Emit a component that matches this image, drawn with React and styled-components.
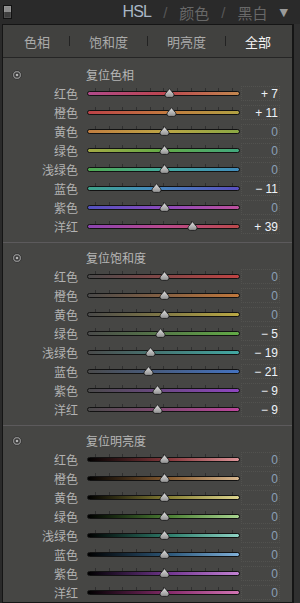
import React from "react";
import styled, { createGlobalStyle } from "styled-components";

const Global = createGlobalStyle`
  html, body { margin: 0; padding: 0; background: #2a2a2a; }
  body { width: 300px; height: 603px; overflow: hidden; }
  #root { width: 300px; height: 603px; }
`;

const CJK = `"Noto Sans CJK SC", "Noto Sans", sans-serif`;

const Root = styled.div`
  width: 300px;
  height: 603px;
  overflow: hidden;
  background: #2a2a2a;
  display: flex;
  flex-direction: column;
`;

const Header = styled.div`
  height: 24px;
  flex: none;
  display: flex;
  align-items: center;
  padding: 0 12px 0 3px;
`;

const PanelToggle = styled.div`
  width: 7px;
  height: 12px;
  border: 1px solid #121212;
  background: linear-gradient(to bottom, #8a8a8a 0 50%, #3e3e3e 50% 100%);
  box-shadow: inset 0 0 0 1px rgba(255,255,255,0.08);
  margin-top: -1px;
`;

const Nav = styled.div`
  margin-left: auto;
  display: flex;
  align-items: center;
  gap: 12px;
`;

const NavItem = styled.span`
  font-family: ${(p) => (p.$latin ? `"Liberation Sans", Arial, sans-serif` : CJK)};
  font-size: ${(p) => (p.$latin ? "16px" : "15px")};
  letter-spacing: ${(p) => (p.$latin ? "-0.8px" : "0")};
  color: ${(p) => (p.$active ? "#a9b6c5" : "#686868")};
  line-height: 1;
`;

const NavSlash = styled.span`
  font-family: "Liberation Sans", Arial, sans-serif;
  font-size: 15px;
  color: #575757;
  line-height: 1;
`;

const Caret = styled.span`
  font-family: "DejaVu Sans", sans-serif;
  font-size: 11px;
  color: #9a9a9a;
  line-height: 1;
`;

const Body = styled.div`
  flex: 1;
  display: flex;
  min-height: 0;
`;

const Panel = styled.div`
  margin-left: 2px;
  width: 289px;
  border: 1px solid #151515;
  border-right-width: 2px;
  background: #464644;
  display: flex;
  flex-direction: column;
`;

const Gutter = styled.div`
  flex: 1;
  background: #303030;
`;

const TabBar = styled.div`
  height: 32px;
  flex: none;
  background: #41413f;
  border-bottom: 1px solid #252525;
  display: flex;
  align-items: center;
  gap: 19px;
  padding-left: 21px;
`;

const Tab = styled.span`
  font-family: ${CJK};
  font-size: 13px;
  line-height: 1;
  color: ${(p) => (p.$active ? "#f4f4f4" : "#aaaaaa")};
`;

const TabSep = styled.span`
  width: 1px;
  height: 10px;
  background: #222;
`;

const Section = styled.div`
  padding: ${(p) => (p.$first ? "8px" : "6px")} 0 6px;
  border-top: ${(p) => (p.$first ? "none" : "1px solid #5c5a5c")};
`;

const Grid = styled.div`
  display: grid;
  grid-template-columns: 84px 153px 40px;
  align-items: center;
  height: ${(p) => p.$h}px;
`;

const ResetIcon = styled.svg`
  margin-left: 9px;
  display: block;
`;

const SectionTitle = styled.span`
  font-family: ${CJK};
  font-size: 12px;
  line-height: 1;
  color: #b6b6b6;
  margin-left: -1px;
`;

const Label = styled.span`
  font-family: ${CJK};
  font-size: 12px;
  line-height: 1;
  color: #b2b2b2;
  justify-self: end;
  padding-right: 9px;
`;

const TrackWrap = styled.div`
  position: relative;
  height: 19px;
  display: flex;
  align-items: center;
  &::before {
    content: "";
    position: absolute;
    left: 8px;
    width: 138px;
    top: 4px;
    height: 3px;
    background: repeating-linear-gradient(
      to right,
      #303030 0 1px,
      transparent 1px 13.7px
    );
  }
`;

const Track = styled.div`
  width: 100%;
  height: 5px;
  box-sizing: border-box;
  border: 1px solid #121212;
  border-radius: 3px;
  background: ${(p) => p.$bg};
`;

const Thumb = styled.svg`
  position: absolute;
  top: 4px;
  display: block;
`;

const ValueBox = styled.div`
  margin-left: 1px;
  width: 39px;
  height: 15px;
  box-sizing: border-box;
  border: 1px dotted #52524f;
  display: flex;
  align-items: center;
  justify-content: flex-end;
  padding-right: 1px;
  font-family: "Liberation Sans", Arial, sans-serif;
  font-size: 12px;
  line-height: 1;
  color: ${(p) => (p.$zero ? "#8a9fb6" : "#eef2f8")};
  white-space: pre;
`;

const names = ["红色", "橙色", "黄色", "绿色", "浅绿色", "蓝色", "紫色", "洋红"];

const hueBg = [
  "linear-gradient(to right, #b04a8a, #bc4650 50%, #c2874e)",
  "linear-gradient(to right, #bc4247, #c2783f 50%, #b0a042)",
  "linear-gradient(to right, #c27e40, #bca545 50%, #8aa844)",
  "linear-gradient(to right, #a4aa44, #62aa47 50%, #42a87e)",
  "linear-gradient(to right, #50aa50, #42aa9e 50%, #428cbc)",
  "linear-gradient(to right, #3ea48a, #448cbc 40%, #5a4ebe)",
  "linear-gradient(to right, #5252c0, #8c4abc 50%, #bc509c)",
  "linear-gradient(to right, #8c44b2, #ba4a8e 50%, #bc4a4c)",
];

const satBg = [
  "linear-gradient(to right, #4a4a4a, #c04444)",
  "linear-gradient(to right, #4a4a4a, #c0773c)",
  "linear-gradient(to right, #4a4a4a, #baa944)",
  "linear-gradient(to right, #4a4a4a, #62aa46)",
  "linear-gradient(to right, #4a4a4a, #42a8a2)",
  "linear-gradient(to right, #4a4a4a, #4472c0)",
  "linear-gradient(to right, #4a4a4a, #8e46c0)",
  "linear-gradient(to right, #4a4a4a, #bc469c)",
];

const lumBg = [
  "linear-gradient(to right, #000, #8a3a3e 55%, #dc9498)",
  "linear-gradient(to right, #000, #8a5e32 55%, #d8b890)",
  "linear-gradient(to right, #000, #8a8236 55%, #dcd48e)",
  "linear-gradient(to right, #000, #4e8236 55%, #a8d490)",
  "linear-gradient(to right, #000, #30806e 55%, #8ed2c4)",
  "linear-gradient(to right, #000, #2f5a7c 55%, #80b0d8)",
  "linear-gradient(to right, #000, #743892 55%, #c282d2)",
  "linear-gradient(to right, #000, #882c6c 55%, #d274b4)",
];

const sections = [
  { title: "复位色相", bgs: hueBg, values: [7, 11, 0, 0, 0, -11, 0, 39] },
  { title: "复位饱和度", bgs: satBg, values: [0, 0, 0, -5, -19, -21, -9, -9] },
  { title: "复位明亮度", bgs: lumBg, values: [0, 0, 0, 0, 0, 0, 0, 0] },
];

const fmt = (v) => (v > 0 ? `+ ${v}` : v < 0 ? `\u2212 ${-v}` : "0");

function ThumbIcon({ value }) {
  const center = 77 + value * 0.72;
  return (
    <Thumb width="11" height="10" viewBox="0 0 11 10" style={{ left: `${center - 5.5}px` }}>
      <defs>
        <linearGradient id="thumbG" x1="0" y1="0" x2="0" y2="1">
          <stop offset="0" stopColor="#e2e2e2" />
          <stop offset="1" stopColor="#8e8e8e" />
        </linearGradient>
      </defs>
      <path
        d="M5.5 0.6 C6.6 2.2 8.4 4 9.5 5.5 C10.6 7.1 10.1 9.3 7.8 9.4 L3.2 9.4 C0.9 9.3 0.4 7.1 1.5 5.5 C2.6 4 4.4 2.2 5.5 0.6 Z"
        fill="url(#thumbG)"
        stroke="#1c1c1c"
        strokeWidth="0.9"
      />
    </Thumb>
  );
}

function Reset() {
  return (
    <ResetIcon width="10" height="10" viewBox="0 0 10 10">
      <circle cx="5" cy="5" r="4.5" fill="#8e8e8e" stroke="#2a2a2a" strokeWidth="0.8" />
      <circle cx="5" cy="5" r="2.8" fill="#3a3a3a" />
      <circle cx="5" cy="5" r="1.3" fill="#b4b4b4" />
    </ResetIcon>
  );
}

function SliderRow({ name, bg, value }) {
  return (
    <Grid $h={19}>
      <Label>{name}</Label>
      <TrackWrap>
        <Track $bg={bg} />
        <ThumbIcon value={value} />
      </TrackWrap>
      <ValueBox $zero={value === 0}>{fmt(value)}</ValueBox>
    </Grid>
  );
}

export default function App() {
  return (
    <Root>
      <Global />
      <Header>
        <PanelToggle />
        <Nav>
          <NavItem $latin $active>HSL</NavItem>
          <NavSlash>/</NavSlash>
          <NavItem>颜色</NavItem>
          <NavSlash>/</NavSlash>
          <NavItem>黑白</NavItem>
          <Caret>▼</Caret>
        </Nav>
      </Header>
      <Body>
        <Panel>
          <TabBar>
            <Tab>色相</Tab>
            <TabSep />
            <Tab>饱和度</Tab>
            <TabSep />
            <Tab>明亮度</Tab>
            <TabSep />
            <Tab $active>全部</Tab>
          </TabBar>
          {sections.map((s, i) => (
            <Section key={s.title} $first={i === 0}>
              <Grid $h={18}>
                <Reset />
                <SectionTitle>{s.title}</SectionTitle>
              </Grid>
              {names.map((n, j) => (
                <SliderRow key={n} name={n} bg={s.bgs[j]} value={s.values[j]} />
              ))}
            </Section>
          ))}
        </Panel>
        <Gutter />
      </Body>
    </Root>
  );
}
